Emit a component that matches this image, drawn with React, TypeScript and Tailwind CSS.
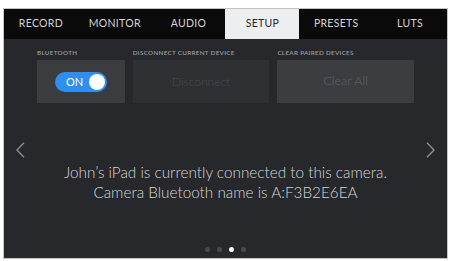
const tabs = ["RECORD", "MONITOR", "AUDIO", "SETUP", "PRESETS", "LUTS"];

function Toggle({ on }: { on: boolean }) {
  return (
    <div className="flex h-[20px] w-[52px] items-center justify-between rounded-full bg-[#2f8ff0] pl-[11px] pr-[2px]">
      <span className="text-[11px] leading-none text-white">{on ? "ON" : "OFF"}</span>
      <span className="h-[16px] w-[16px] rounded-full bg-white" />
    </div>
  );
}

function Chevron({ dir }: { dir: "left" | "right" }) {
  return (
    <svg width="9" height="16" viewBox="0 0 9 16" fill="none" stroke="#8c8d90" strokeWidth="1.4">
      <polyline points={dir === "left" ? "8,0.7 1,8 8,15.3" : "1,0.7 8,8 1,15.3"} />
    </svg>
  );
}

export default function App() {
  return (
    <div className="h-[261px] w-[457px] bg-white pl-[3px] pt-[8px] font-['Lato',sans-serif]">
      <div className="flex h-[251px] w-[445px] flex-col border border-[#c4c4c4] bg-[#27282c]">
        {/* tab bar */}
        <div className="flex h-[30px] bg-[#0a0a0a]">
          {tabs.map((tab) => (
            <div
              key={tab}
              className={`flex flex-1 items-center justify-center text-[10.5px] tracking-[0.3px] ${
                tab === "SETUP" ? "bg-[#eceef0] text-[#2a2a2a]" : "text-[#d4d4d4]"
              }`}
            >
              {tab}
            </div>
          ))}
        </div>

        {/* settings row */}
        <div className="flex gap-[8px] px-[33px] pt-[10px]">
          <div className="flex w-[88px] flex-col">
            <span className="h-[11px] text-[6.3px] font-semibold leading-[8px] tracking-[0.3px] text-[#9a9b9e]">BLUETOOTH</span>
            <div className="flex h-[43px] items-center justify-center bg-[#3b3c40]">
              <Toggle on />
            </div>
          </div>
          <div className="flex w-[137px] flex-col">
            <span className="h-[11px] text-[6.3px] font-semibold leading-[8px] tracking-[0.3px] text-[#9a9b9e]">DISCONNECT CURRENT DEVICE</span>
            <div className="flex h-[43px] items-center justify-center bg-[#2f3034] text-[12px] font-light text-[#4a4b4f]">
              Disconnect
            </div>
          </div>
          <div className="flex w-[137px] flex-col">
            <span className="h-[11px] text-[6.3px] font-semibold leading-[8px] tracking-[0.3px] text-[#9a9b9e]">CLEAR PAIRED DEVICES</span>
            <div className="flex h-[43px] items-center justify-center bg-[#3c3d41] text-[12.5px] font-light text-[#626367]">
              Clear All
            </div>
          </div>
        </div>

        {/* message area */}
        <div className="flex flex-1 flex-col">
          <div className="mt-[39px] flex justify-between px-[12px]">
            <Chevron dir="left" />
            <Chevron dir="right" />
          </div>
          <div className="mt-[4px] text-center text-[15.3px] font-light leading-[20px] text-[#d6d6d6]">
            <p>John’s iPad is currently connected to this camera.</p>
            <p>Camera Bluetooth name is A:F3B2E6EA</p>
          </div>
          <div className="mt-auto mb-[6px] flex justify-center gap-[7px]">
            {[0, 1, 2, 3].map((i) => (
              <span
                key={i}
                className={`h-[5px] w-[5px] rounded-full ${i === 2 ? "bg-white" : "bg-[#4a4b4f]"}`}
              />
            ))}
          </div>
        </div>
      </div>
    </div>
  );
}
